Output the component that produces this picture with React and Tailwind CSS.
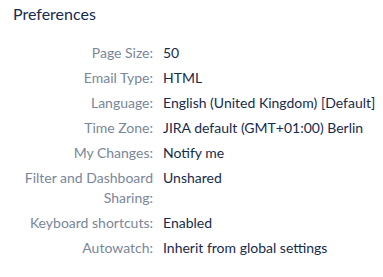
import React from 'react';

const rows = [
    ['Page Size:', '50'],
    ['Email Type:', 'HTML'],
    ['Language:', 'English (United Kingdom) [Default]'],
    ['Time Zone:', 'JIRA default (GMT+01:00) Berlin'],
    ['My Changes:', 'Notify me'],
    ['Filter and Dashboard Sharing:', 'Unshared'],
    ['Keyboard shortcuts:', 'Enabled'],
    ['Autowatch:', 'Inherit from global settings'],
];

export default function App() {
    return (
        <div className="w-[383px] h-[277px] bg-white font-['Lato',sans-serif] text-[#172b4d]">
            <h2 className="px-[13px] pt-[3px] text-[16px] leading-[22px]">Preferences</h2>

            {/* Preference rows */}
            <dl className="mt-[18px] flex flex-col gap-[5px] text-[14px] leading-[20px]">
                {rows.map(([label, value]) => (
                    <div key={label} className="flex">
                        <dt className="w-[153px] shrink-0 pl-[20px] text-right text-[#7a869a]">{label}</dt>
                        <dd className="pl-[10px]">{value}</dd>
                    </div>
                ))}
            </dl>
        </div>
    );
}
